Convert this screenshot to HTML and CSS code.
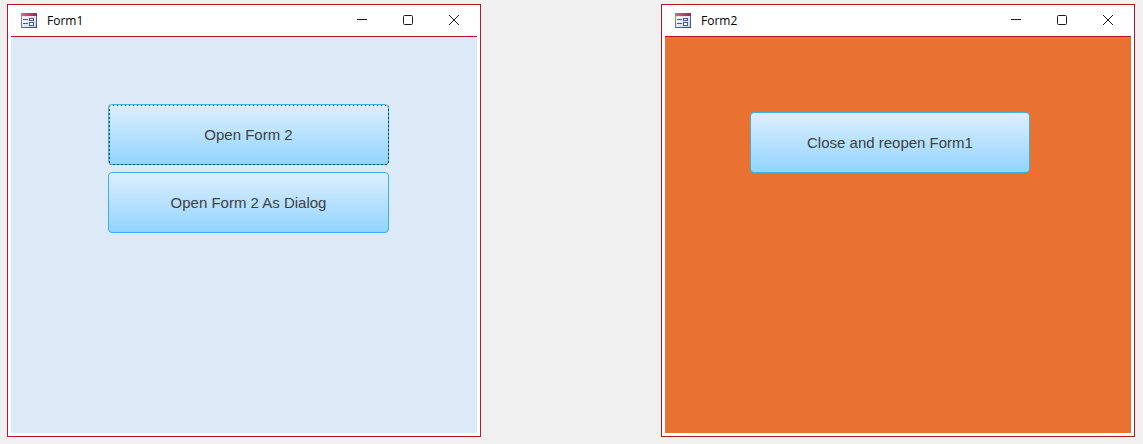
FILE: index.html
```html
<!doctype html>
<html lang="en">

<head>
    <meta charset="UTF-8">
    <meta name="viewport" content="width=device-width, initial-scale=1.0">
    <title>Forms</title>
    <link rel="stylesheet" href="styles.css">
</head>

<body>
    <svg class="symbols" aria-hidden="true">
        <defs>
            <linearGradient id="bar" x1="0" x2="1" y1="0" y2="0">
                <stop offset="0" stop-color="#d8688c" />
                <stop offset="1" stop-color="#8f2a50" />
            </linearGradient>
            <linearGradient id="paper" x1="0" x2="1" y1="0" y2="1">
                <stop offset="0" stop-color="#ffffff" />
                <stop offset="1" stop-color="#c9d4ea" />
            </linearGradient>
            <linearGradient id="frame" x1="0" x2="1" y1="0" y2="1">
                <stop offset="0" stop-color="#8c9cc0" />
                <stop offset="1" stop-color="#34466f" />
            </linearGradient>
        </defs>
        <symbol id="icon-form" viewBox="0 0 16 16">
            <rect x="0.5" y="2.5" width="15" height="12" fill="url(#paper)" stroke="url(#frame)" />
            <rect x="0" y="0" width="16" height="3" fill="url(#bar)" />
            <path d="M1 3.5h14" stroke="#f4dfe8" />
            <path d="M2 6.5h5M2 10.5h5" stroke="#475a88" />
            <rect x="8.5" y="5.5" width="4" height="2" fill="#fff" stroke="#475a88" />
            <rect x="8.5" y="9.5" width="4" height="3" fill="#fff" stroke="#475a88" />
        </symbol>
        <symbol id="icon-minimize" viewBox="0 0 12 12">
            <path d="M1 4.5h10" fill="none" stroke="#1a1a1a" />
        </symbol>
        <symbol id="icon-maximize" viewBox="0 0 12 12">
            <rect x="1.5" y="0.5" width="9" height="9" rx="1" fill="none" stroke="#1a1a1a" />
        </symbol>
        <symbol id="icon-close" viewBox="0 0 12 12">
            <path d="M1 0l10 10M11 0L1 10" fill="none" stroke="#1a1a1a" />
        </symbol>
    </svg>

    <main class="desktop">
        <section class="window">
            <header class="titlebar">
                <svg class="titlebar--icon" aria-hidden="true"><use href="#icon-form" /></svg>
                <h1 class="titlebar--text">Form1</h1>
                <button class="control" aria-label="Minimize"><svg><use href="#icon-minimize" /></svg></button>
                <button class="control" aria-label="Maximize"><svg><use href="#icon-maximize" /></svg></button>
                <button class="control" aria-label="Close"><svg><use href="#icon-close" /></svg></button>
            </header>
            <div class="form form--blue">
                <button class="command command--focused">Open Form 2</button>
                <button class="command">Open Form 2 As Dialog</button>
            </div>
        </section>

        <section class="window">
            <header class="titlebar">
                <svg class="titlebar--icon" aria-hidden="true"><use href="#icon-form" /></svg>
                <h1 class="titlebar--text">Form2</h1>
                <button class="control" aria-label="Minimize"><svg><use href="#icon-minimize" /></svg></button>
                <button class="control" aria-label="Maximize"><svg><use href="#icon-maximize" /></svg></button>
                <button class="control" aria-label="Close"><svg><use href="#icon-close" /></svg></button>
            </header>
            <div class="form form--orange">
                <button class="command">Close and reopen Form1</button>
            </div>
        </section>
    </main>
</body>

</html>
```
FILE: styles.css
```css
* {
    box-sizing: border-box;
}

body {
    margin: 0;
    background-color: #f0f0f0;
    font-family: "Liberation Sans", Arial, sans-serif;
}

.symbols {
    position: absolute;
    width: 0;
    height: 0;
}

.desktop {
    display: flex;
    justify-content: space-between;
    align-items: flex-start;
    gap: 16px;
    padding: 4px 8px 7px 7px;
}

.window {
    flex: 0 1 474px;
    min-width: 0;
    padding: 0 3px 3px;
    background-color: #ffffff;
    border: 1px solid #b5172f;
}

.titlebar {
    display: flex;
    align-items: center;
    height: 32px;
    padding-left: 10px;
    border-bottom: 1px solid #b5172f;
}

.titlebar--icon {
    width: 16px;
    height: 16px;
}

.titlebar--text {
    flex: 1;
    margin: 0 0 0 10px;
    font-family: "Open Sans", "Noto Sans", sans-serif;
    font-size: 12px;
    font-weight: 400;
    line-height: 16px;
    color: #000000;
}

.control {
    display: flex;
    justify-content: center;
    align-items: center;
    width: 46px;
    height: 30px;
    padding: 0;
    border: none;
    background: none;
}

.control svg {
    width: 12px;
    height: 12px;
}

.form {
    display: flex;
    flex-direction: column;
    gap: 7px;
    min-height: 396px;
}

.form--blue {
    padding: 67px 88px 0 97px;
    background-color: #dce9f6;
}

.form--orange {
    padding: 75px 101px 0 85px;
    background-color: #e97132;
}

.command {
    position: relative;
    height: 61px;
    padding: 0;
    border: 1px solid #41b0e0;
    border-radius: 4px;
    background: linear-gradient(#ddeffe, #92d4ff);
    font-family: inherit;
    font-size: 15px;
    color: #404040;
}

/* dotted focus marker just inside the border */
.command--focused::after {
    content: "";
    position: absolute;
    inset: 0 -1px -1px 0;
    border-radius: 3px;
    background:
        repeating-linear-gradient(90deg, #10243c 0 1px, transparent 1px 4px) top / 100% 1px no-repeat,
        repeating-linear-gradient(90deg, #10405c 0 2px, transparent 2px 4px) bottom / 100% 1px no-repeat,
        repeating-linear-gradient(#10405c 0 2px, transparent 2px 4px) left / 1px 100% no-repeat,
        repeating-linear-gradient(#10405c 0 2px, transparent 2px 4px) right / 1px 100% no-repeat;
}
```
